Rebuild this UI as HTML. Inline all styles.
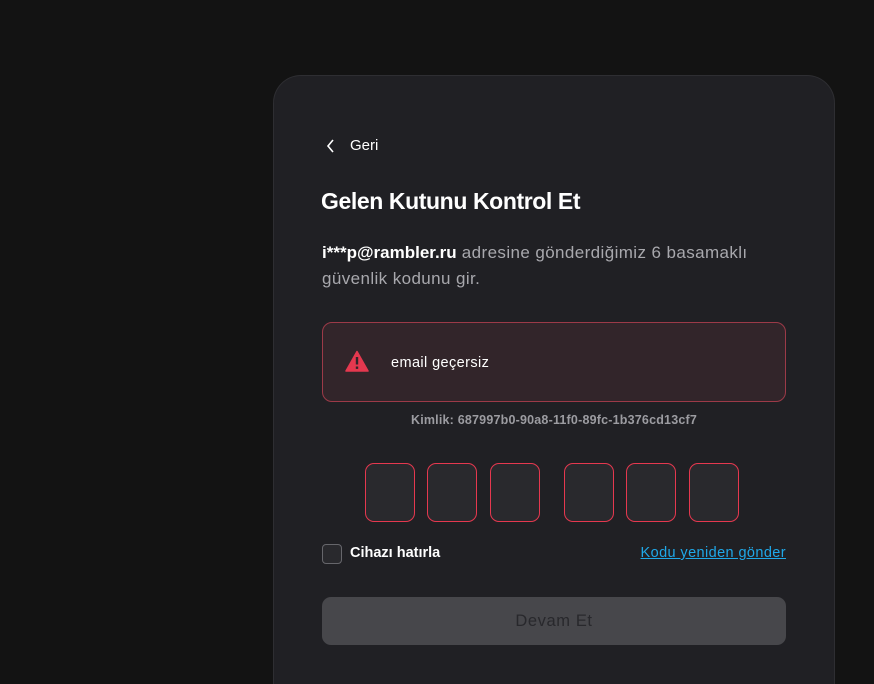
<!DOCTYPE html>
<html style="overflow:hidden;height:684px"><head><meta charset="utf-8"><style>
*{margin:0;padding:0;box-sizing:border-box}
body{width:874px;height:684px;background:#131313;font-family:"Liberation Sans",sans-serif;position:relative;overflow:hidden}
.card{position:absolute;left:273px;top:75px;width:562px;height:609px;background:#202024;border:1px solid #2e2e32;border-bottom:none;border-radius:28px 28px 0 0}
.a{position:absolute}
.box{position:absolute;top:463px;width:50px;height:59px;border:1px solid #e5384f;border-radius:9px;background:#29292d}
</style></head><body>
<div class="card"></div>
<svg class="a" style="left:325px;top:138px" width="12" height="16" viewBox="0 0 12 16"><path d="M8 2 L3 8 L8 14" stroke="#fff" stroke-width="1.6" fill="none"/></svg>
<div class="a" style="left:350px;top:137px;font-size:15px;color:#fff">Geri</div>
<div class="a" style="left:321px;top:188px;font-size:23px;font-weight:bold;color:#fff;letter-spacing:-0.4px">Gelen Kutunu Kontrol Et</div>
<div class="a" style="left:322px;top:240px;width:464px;font-size:17px;letter-spacing:0.4px;line-height:26px;color:#a8a8ad"><b style="color:#fff;letter-spacing:0">i***p@rambler.ru</b> adresine gönderdiğimiz 6 basamaklı güvenlik kodunu gir.</div>
<div class="a" style="left:322px;top:322px;width:464px;height:80px;border:1px solid #9c3a48;border-radius:10px;background:#32252a"></div>
<svg class="a" style="left:345px;top:350px" width="24" height="22" viewBox="0 0 24 22"><path d="M12 1.5 L23 21 H1 Z" fill="#e5384f" stroke="#e5384f" stroke-width="1.5" stroke-linejoin="round"/><rect x="10.8" y="7" width="2.4" height="7.5" fill="#32252a"/><rect x="10.8" y="16.5" width="2.4" height="2.4" fill="#32252a"/></svg>
<div class="a" style="left:391px;top:355px;font-size:14.5px;letter-spacing:0.4px;color:#fff">email geçersiz</div>
<div class="a" style="left:322px;top:413px;width:464px;text-align:center;font-size:12.5px;letter-spacing:0.2px;font-weight:bold;color:#9c9ca1">Kimlik: 687997b0-90a8-11f0-89fc-1b376cd13cf7</div>
<div class="box" style="left:365px"></div><div class="box" style="left:427px"></div><div class="box" style="left:490px"></div>
<div class="box" style="left:564px"></div><div class="box" style="left:626px"></div><div class="box" style="left:689px"></div>
<div class="a" style="left:322px;top:544px;width:20px;height:20px;border:1px solid #66666b;border-radius:4px;background:#29292d"></div>
<div class="a" style="left:350px;top:545px;font-size:14.5px;color:#fff;font-weight:bold">Cihazı hatırla</div>
<div class="a" style="left:586px;width:200px;text-align:right;top:545px;font-size:14.5px;letter-spacing:0.4px;color:#1fa8e8;text-decoration:underline">Kodu yeniden gönder</div>
<div class="a" style="left:322px;top:597px;width:464px;height:48px;border-radius:9px;background:#47474b;text-align:center;line-height:48px;font-size:16.5px;letter-spacing:0.6px;color:#28282c">Devam Et</div>
</body></html>
